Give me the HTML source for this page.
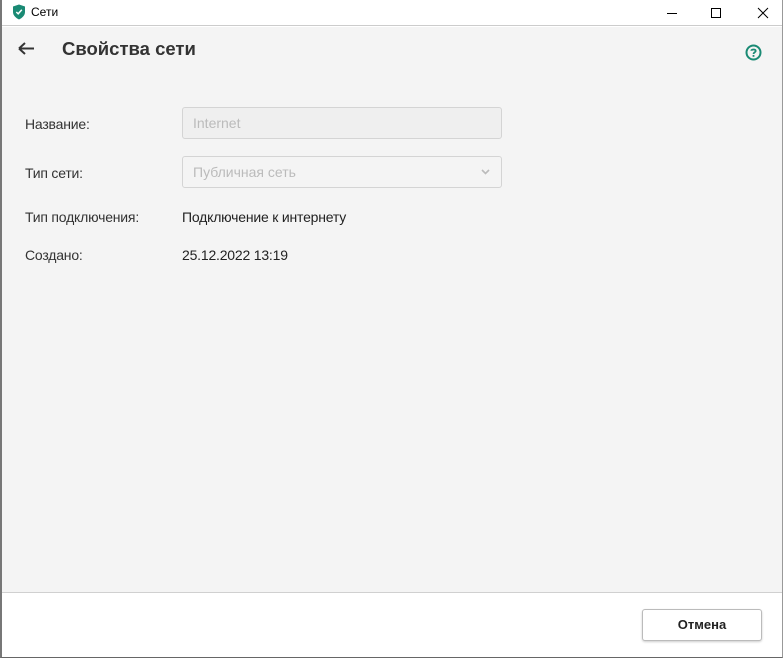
<!DOCTYPE html>
<html><head><meta charset="utf-8"><style>
*{margin:0;padding:0;box-sizing:border-box}
body{width:783px;height:659px;overflow:hidden;background:#fff;font-family:"Liberation Sans","Noto Sans CJK SC",sans-serif;position:relative;color:#222}
.win{position:absolute;left:0;top:0;width:783px;height:658px;border-left:2px solid #777;border-right:1px solid #999;border-bottom:1px solid #666;background:#fff}
.tb{position:absolute;left:0;top:0;right:0;height:26px;border-bottom:1px solid #ccc;background:#fff}
.tb .t{position:absolute;left:29px;top:5px;font-size:12px;color:#000}
.content{position:absolute;left:0;right:0;top:27px;height:566px;background:#f4f4f4;border-bottom:1px solid #d0d0d0}
.h{position:absolute;left:60px;top:11px;font-size:18.5px;font-weight:bold;color:#333}
.lbl{position:absolute;left:23px;font-size:14px;color:#333;letter-spacing:-0.2px}
.val{position:absolute;left:180px;font-size:14px;color:#222;letter-spacing:-0.2px}
.inp{position:absolute;left:180px;width:320px;height:32px;border:1px solid #d4d4d4;border-radius:3px;font-size:14px;color:#bbb;padding:7px 0 0 10px}
.btn{position:absolute;left:640px;top:609px;width:120px;height:32px;border:1px solid #bbb;border-radius:3px;background:#fff;font-size:13px;font-weight:bold;text-align:center;line-height:30px;box-shadow:0 1px 2px rgba(0,0,0,.2)}
</style></head><body>
<div class="win">
<div class="tb">
<svg style="position:absolute;left:10px;top:4px" width="14" height="16" viewBox="0 0 14 16"><path d="M7 0.5L13 2.5V8C13 11.5 10 14 7 15.5C4 14 1 11.5 1 8V2.5Z" fill="#1a8a74"/><path d="M4.3 8L6.2 9.8L9.8 5.8" stroke="#fff" stroke-width="1.5" fill="none"/></svg>
<div class="t">Сети</div>
<svg style="position:absolute;left:658px;top:4px" width="120" height="16"><path d="M7 9.5H17" stroke="#000"/><rect x="711.5" y="4.5" width="9" height="9" fill="none" stroke="#000" transform="translate(-660,0)"/><path d="M99 5L109 15M109 5L99 15" stroke="#000" transform="translate(-1,-1)"/></svg>
</div>
<div class="content">
<svg style="position:absolute;left:15px;top:14px" width="20" height="16"><path d="M2 7.5H17M2 7.5L8 2M2 7.5L8 13" stroke="#333" stroke-width="2" fill="none"/></svg>
<div class="h">Свойства сети</div>
<svg style="position:absolute;left:743px;top:17px" width="17" height="17"><circle cx="8.5" cy="8.5" r="7" stroke="#1a8a74" stroke-width="2" fill="none"/><path d="M6.3 6.8C6.3 5 10.7 5 10.7 7C10.7 8.3 8.5 8.3 8.5 10" stroke="#1a8a74" stroke-width="1.8" fill="none"/><rect x="7.6" y="11" width="1.8" height="1.8" fill="#1a8a74"/></svg>
<div class="lbl" style="top:89px">Название:</div>
<div class="inp" style="top:80px;background:#efefef">Internet</div>
<div class="lbl" style="top:138px">Тип сети:</div>
<div class="inp" style="top:129px;background:#f4f4f4">Публичная сеть
<svg style="position:absolute;right:11px;top:12px" width="9" height="6"><path d="M1 1L4.5 4.5L8 1" stroke="#bbb" stroke-width="1.6" fill="none"/></svg></div>
<div class="lbl" style="top:182px">Тип подключения:</div>
<div class="val" style="top:182px">Подключение к интернету</div>
<div class="lbl" style="top:220px">Создано:</div>
<div class="val" style="top:220px">25.12.2022 13:19</div>
</div>
<div class="btn">Отмена</div>
</div>
</body></html>
